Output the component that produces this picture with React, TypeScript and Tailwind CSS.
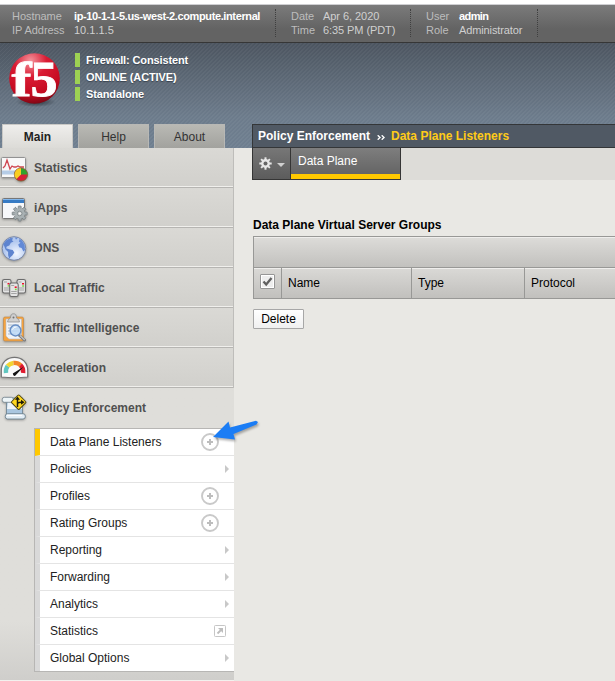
import type { ReactNode } from "react";

function Logo() {
  return (
    <svg width="54" height="56" viewBox="0 0 54 56" className="block overflow-visible">
      <defs>
        <radialGradient id="ball" cx="0.42" cy="0.15" r="0.9">
          <stop offset="0" stopColor="#f4949c" />
          <stop offset="0.35" stopColor="#da1c34" />
          <stop offset="0.75" stopColor="#c40a20" />
          <stop offset="1" stopColor="#6d0712" />
        </radialGradient>
        <radialGradient id="shade">
          <stop offset="0" stopColor="#1f252c" stopOpacity="0.8" />
          <stop offset="1" stopColor="#1f252c" stopOpacity="0" />
        </radialGradient>
      </defs>
      <ellipse cx="28" cy="49" rx="20" ry="5" fill="url(#shade)" />
      <circle cx="26.5" cy="25.5" r="25.3" fill="url(#ball)" />
      <g fill="#fff" stroke="#fff" strokeWidth="0.8" fontWeight="bold">
        <text x="3.5" y="42.5" fontSize="48" fontFamily="Liberation Serif, serif" textLength="20" lengthAdjust="spacingAndGlyphs">f</text>
        <text x="22.5" y="42.5" fontSize="50" fontFamily="Liberation Serif, serif" textLength="27" lengthAdjust="spacingAndGlyphs">5</text>
      </g>
    </svg>
  );
}

function StatisticsIcon() {
  return (
    <>
      <rect x="1.5" y="4.5" width="24" height="20" rx="1" fill="#f8f8f8" stroke="#929292" />
      <path d="M2 18.5h23M2 20.5h13" stroke="#b5cce6" strokeWidth="2" />
      <path d="M3 15l2-2 2-6 3 9 2-3 2 1 2 0 2-1 2 1h4" fill="none" stroke="#cf4651" strokeWidth="1.3" />
      <circle cx="21" cy="21.5" r="6.6" fill="#d91e38" stroke="#74652c" strokeWidth="0.8" />
      <path d="M21 21.5V15.2A6.3 6.3 0 0 0 16.5 26z" fill="#f8ce22" />
      <path d="M21 21.5V15.2A6.3 6.3 0 0 1 27.3 21.5z" fill="#30a42c" />
    </>
  );
}

const gearTeeth = [0, 45, 90, 135];

function AppsIcon() {
  return (
    <>
      <rect x="2.5" y="5.5" width="22" height="20" rx="1" fill="#f7f8fa" stroke="#777" />
      <path d="M3 8h21" stroke="#377bc4" strokeWidth="4" />
      <path d="M3 6.5h21" stroke="#82b7ec" />
      <g fill="#a2aaad" stroke="#727b7e" strokeWidth="0.7">
        {gearTeeth.map((a) => (
          <rect key={a} x="18.2" y="13" width="3" height="15" rx="0.6" transform={`rotate(${a} 19.7 20.5)`} />
        ))}
      </g>
      <circle cx="19.7" cy="20.5" r="5.2" fill="#a9b1b3" />
      <circle cx="19.7" cy="20.5" r="2.3" fill="#d6d9d9" stroke="#7b8487" strokeWidth="0.8" />
      <circle cx="19.7" cy="20.5" r="0.8" fill="#fff" />
    </>
  );
}

function GlobeIcon() {
  return (
    <>
      <defs>
        <radialGradient id="sea" cx="0.6" cy="0.7">
          <stop offset="0" stopColor="#f3f7ff" />
          <stop offset="1" stopColor="#b3c9f0" />
        </radialGradient>
      </defs>
      <circle cx="14" cy="15.5" r="11.8" fill="url(#sea)" stroke="#7786a7" />
      <path d="M3.2 11.5L6 7.5l4.5-2.6 2.5.3-1 2 1.5 1.2-2.7 1.4-1.5 2.8-2.6.8-.6 1.8 3 1 3.6.8 1.6 2.6-2 3-2 1.6-1 1.7-1.2-3.6 0-3.2-2.6-2.6-1.2-3.2z" fill="#5e84cf" />
      <path d="M19.5 6l2.5 1.4 2.6 4.6.4 5-1.6 1.5-1.8-3.6-2.4-.6-1-2.8 2.3-1.8-1.6-1zM15 4.4l2.6.6-1.6 1.8z" fill="#6289d6" />
    </>
  );
}

function Server({ x, y }: { x: number; y: number }) {
  return (
    <g transform={`translate(${x} ${y})`}>
      <rect x="0" y="0" width="8.5" height="13.5" rx="1.8" fill="#e4e4e4" stroke="#6c6c6c" strokeWidth="1.1" />
      <path d="M1.5 2.5h3M1.5 8.5h5.5M1.5 10.5h5.5" stroke="#a4a4a4" />
      <path d="M5 4.2h2" stroke="#ec1226" strokeWidth="1.6" />
      <path d="M5.2 6.4h1.8" stroke="#74dd3e" strokeWidth="1.5" />
    </g>
  );
}

function TrafficIcon() {
  return (
    <>
      <Server x={2.5} y={6.5} />
      <Server x={17} y={6.5} />
      <Server x={9.7} y={10} />
    </>
  );
}

function ClipboardIcon() {
  return (
    <>
      <rect x="3.5" y="4" width="20" height="24" rx="1.5" fill="#f7a440" stroke="#bc8747" strokeWidth="0.6" />
      <path d="M6 6h15.5v20H9l-3-3z" fill="#f1f3f7" stroke="#b9b9b9" strokeWidth="0.6" />
      <path d="M8 12h11M8 15h11M8 18h11M8 21h8" stroke="#a6b8cb" />
      <path d="M7.5 9q0-3 3-4 0-4.2 3-4.2t3 4.2q3 1 3 4z" fill="#d0d0d0" stroke="#888" strokeWidth="0.7" />
      <circle cx="13.5" cy="4.4" r="1" fill="#717171" />
      <path d="M19.5 22.5l5 4.5" stroke="#7c7c7c" strokeWidth="3" strokeLinecap="round" />
      <path d="M20 22.5l4.7 4.5" stroke="#c0c0c0" strokeWidth="1.3" />
      <circle cx="15.5" cy="17.5" r="5.4" fill="#bed9f6" fillOpacity="0.85" stroke="#698fc5" strokeWidth="1.5" />
      <path d="M12.5 16.5q1-3 4-2.5" stroke="#fff" fill="none" />
    </>
  );
}

function GaugeIcon() {
  return (
    <>
      <path d="M1.3 24V17.5C1.3 9.5 7 4.3 14.5 4.3S27.7 9.5 27.7 17.5V24q-13 1.5-26.4 0z" fill="#fafafa" stroke="#747474" strokeWidth="1.2" />
      <g fill="none" strokeWidth="4.4">
        <path d="M6 20Q5.5 16 7.6 13" stroke="#61c7c0" />
        <path d="M7.6 13Q10 10.4 13.5 10" stroke="#f1d431" />
        <path d="M13.5 10Q18 9.5 20.5 12.2" stroke="#f48727" />
        <path d="M20.5 12.2Q23.5 15 23.2 20" stroke="#df1a2e" />
      </g>
      <path d="M12.8 20.5l10.8-6.7-8.4 9q-2 .8-2.4-2.3z" fill="#141414" />
    </>
  );
}

function PolicyIcon() {
  return (
    <>
      <path d="M4.5 5h18v18q-7 3-16 0V10z" fill="#a9c6df" stroke="#6c808e" strokeWidth="0.8" />
      <path d="M8 8h14v8H7z" fill="#edf4fa" />
      <rect x="2.3" y="4.3" width="11" height="5" rx="2" fill="#edf5f8" stroke="#71828b" strokeWidth="0.8" />
      <rect x="5.3" y="20.7" width="20" height="5.3" rx="2.3" fill="#e2edf5" stroke="#637887" strokeWidth="0.8" />
      <path d="M7 22.4h15" stroke="#fff" />
      <rect x="-5.4" y="-5.4" width="10.8" height="10.8" rx="1" transform="translate(18.7 9.2) rotate(45)" fill="#ffd71d" stroke="#4c4210" strokeWidth="1" />
      <path d="M17.5 14V6M17.5 11q0-1.8 4-1.8" fill="none" stroke="#1d1a09" strokeWidth="1.5" />
      <path d="M15 6.8l2.5-3.4L20 6.8zM21 6.7l3.6 2.5L21 11.7z" fill="#1d1a09" />
    </>
  );
}

function ModuleIcon({ children }: { children: ReactNode }) {
  return (
    <svg width="30" height="30" viewBox="0 0 30 30" className="block shrink-0 drop-shadow-[0_1px_1px_rgba(0,0,0,0.3)]">
      {children}
    </svg>
  );
}

const modules = [
  { label: "Statistics", icon: <StatisticsIcon /> },
  { label: "iApps", icon: <AppsIcon /> },
  { label: "DNS", icon: <GlobeIcon /> },
  { label: "Local Traffic", icon: <TrafficIcon /> },
  { label: "Traffic Intelligence", icon: <ClipboardIcon /> },
  { label: "Acceleration", icon: <GaugeIcon /> },
];

type Mark = "plus" | "arrow" | "link";
const submenu: { label: string; mark: Mark; active?: boolean }[] = [
  { label: "Data Plane Listeners", mark: "plus", active: true },
  { label: "Policies", mark: "arrow" },
  { label: "Profiles", mark: "plus" },
  { label: "Rating Groups", mark: "plus" },
  { label: "Reporting", mark: "arrow" },
  { label: "Forwarding", mark: "arrow" },
  { label: "Analytics", mark: "arrow" },
  { label: "Statistics", mark: "link" },
  { label: "Global Options", mark: "arrow" },
];

function MarkIcon({ mark }: { mark: Mark }) {
  if (mark === "plus")
    return (
      <svg width="18" height="18" className="mr-[15px]">
        <circle cx="9" cy="9" r="8" fill="#fff" stroke="#c9c9c9" strokeWidth="1.9" />
        <path d="M6 9h6M9 6v6" stroke="#bdbdbd" strokeWidth="2" />
      </svg>
    );
  if (mark === "link")
    return (
      <svg width="12" height="12" className="mr-2">
        <rect x="0.5" y="0.5" width="11" height="11" rx="0.8" fill="#fff" stroke="#c6c6c6" />
        <path d="M3.5 8.5L7 5" stroke="#bdbdbd" strokeWidth="1.8" />
        <path d="M4 3h5v5z" fill="#bdbdbd" />
      </svg>
    );
  return (
    <svg width="4" height="8" className="mr-[5px]">
      <path d="M0 0l4 4-4 4z" fill="#c8c8c8" />
    </svg>
  );
}

type InfoRow = { name: string; value: string; style: string };

function InfoGroup({ rows, className, label }: { rows: InfoRow[]; className: string; label: string }) {
  return (
    <div className={`flex h-7 shrink-0 flex-col border-r border-dotted border-[#3f3f3f] ${className}`}>
      {rows.map((r) => (
        <div key={r.name} className="flex h-[14px] whitespace-nowrap leading-[14px]">
          <span className={`shrink-0 text-[#bdbdbd] ${label}`}>{r.name}</span>
          <span className={r.style}>{r.value}</span>
        </div>
      ))}
    </div>
  );
}

function Sidebar() {
  return (
    <nav className="relative h-[533px] w-[234px] shrink-0 border-r border-[#bebdba] bg-[#d9d8d4]">
      {modules.map((m) => (
        <div key={m.label} className="flex h-10 items-center border-b border-[#b6b5b2] bg-linear-to-b from-[#dad9d5] to-[#d1d0cc] shadow-[inset_0_-1px_0_#f0efec]">
          <ModuleIcon>{m.icon}</ModuleIcon>
          <span className="ml-1 font-bold text-[#505050]">{m.label}</span>
        </div>
      ))}
      <div className="mr-[-1px] h-[293px] border-b border-[#f2f1ee] bg-linear-to-b from-[#dfdeda] from-80% to-[#cfcecb]">
        <div className="flex h-10 items-center">
          <ModuleIcon><PolicyIcon /></ModuleIcon>
          <span className="ml-1 font-bold text-[#505050]">Policy Enforcement</span>
        </div>
        <ul className="ml-[34px] border-y border-l border-[#b7b6b4] bg-white">
          {submenu.map((s) => (
            <li
              key={s.label}
              className={`flex h-[27px] items-center justify-between border-b border-l-[5px] border-b-[#e4e4e4] pl-[10px] text-[#222] last:h-[26px] last:border-b-0 ${s.active ? "border-l-[#ffc800]" : "border-l-[#d9d9d9]"}`}
            >
              <span>{s.label}</span>
              <MarkIcon mark={s.mark} />
            </li>
          ))}
        </ul>
      </div>
      <svg width="52" height="26" className="absolute left-[210px] top-[272px] drop-shadow-[1px_2px_1px_rgba(0,0,0,0.3)]">
        <path d="M3 17L18.5 1.5 20 7.5 46 0.8 48 2 46.5 4.5 23.5 14 25 19.5z" fill="#1b7df5" />
      </svg>
    </nav>
  );
}

function TableHead() {
  return (
    <div className="mt-1 border-y border-l border-[#989896]">
      <div className="h-[31px] border-b border-[#989896] bg-linear-to-b from-[#dddcd9] to-[#c2c1be] shadow-[inset_0_1px_0_#efeeec]" />
      <div className="flex h-[30px] items-center bg-linear-to-b from-[#dad9d6] to-[#c1c0bd] shadow-[inset_0_1px_0_#efeeec]">
        <div className="flex h-full w-7 items-start justify-center border-r border-[#989896] pt-[6px]">
          <div className="flex size-[15px] items-center justify-center rounded-[1px] border border-[#969696] bg-[#eee] shadow-[inset_0_0_0_1px_#fff]">
            <svg width="11" height="11"><path d="M1.5 5.5l2.7 3L9.5 2" fill="none" stroke="#606060" strokeWidth="2.3" /></svg>
          </div>
        </div>
        <div className="flex h-full w-[130px] items-center border-r border-[#989896] pl-[6px]">Name</div>
        <div className="flex h-full w-[113px] items-center border-r border-[#989896] pl-[6px]">Type</div>
        <div className="pl-[6px]">Protocol</div>
      </div>
    </div>
  );
}

const tabs = [
  { label: "Main", active: true },
  { label: "Help", active: false },
  { label: "About", active: false },
];

export default function App() {
  return (
    <div className="h-[681px] w-[615px] overflow-hidden bg-[#e9e8e4] font-['Liberation_Sans',Arial,sans-serif] text-[12px] leading-[14px] text-black">
      <div className="h-1 bg-white" />
      <div className="flex h-[39px] border-b border-t border-b-[#363636] border-t-[#cfcfd2] bg-linear-to-b from-[#7b7b7b] to-[#636363] to-65% pl-3 pt-1 text-[11px]">
        <InfoGroup
          className="w-[264px]"
          label="w-[62px] tracking-[-0.05px]"
          rows={[
            { name: "Hostname", value: "ip-10-1-1-5.us-west-2.compute.internal", style: "font-bold text-white tracking-[-0.38px]" },
            { name: "IP Address", value: "10.1.1.5", style: "text-[#d0d0d0]" },
          ]}
        />
        <InfoGroup
          className="w-[135px] pl-[15px]"
          label="w-8"
          rows={[
            { name: "Date", value: "Apr 6, 2020", style: "text-[#d0d0d0] tracking-[-0.05px]" },
            { name: "Time", value: "6:35 PM (PDT)", style: "text-[#d0d0d0] tracking-[-0.08px]" },
          ]}
        />
        <InfoGroup
          className="w-[127px] pl-[15px]"
          label="w-[33px]"
          rows={[
            { name: "User", value: "admin", style: "font-bold text-white tracking-[-0.6px]" },
            { name: "Role", value: "Administrator", style: "text-[#d0d0d0] tracking-[-0.12px]" },
          ]}
        />
      </div>
      <header className="flex h-[105px] flex-col justify-between bg-[repeating-linear-gradient(135deg,rgba(255,255,255,0.045)_0px_1.4px,transparent_1.4px_2.83px),linear-gradient(to_bottom,#4c5560,#6c7b8b_70%,#6f7f90)]">
        <div className="flex pl-2 pt-[10px]">
          <Logo />
          <ul className="ml-[13px] font-bold leading-[14px] text-white">
            {["Firewall: Consistent", "ONLINE (ACTIVE)", "Standalone"].map((t) => (
              <li key={t} className="mb-[3px] flex h-[14px] items-center border-l-[5px] border-[#9dd153] pl-[6px] text-[11px] tracking-[-0.12px] [text-shadow:0_1px_1px_#39434f]">{t}</li>
            ))}
          </ul>
        </div>
        <div className="flex h-6">
          <div className="flex w-[252px] shrink-0 gap-[5px] pl-[2px]">
            {tabs.map((t) => (
              <div key={t.label} className={`flex h-6 w-[71px] items-center justify-center border-l border-r border-t ${t.active ? "border-[#c9c8c5] bg-linear-to-b from-[#efeeec] to-[#dcdbd7] font-bold text-[#222]" : "border-[#b8b8b5] bg-linear-to-b from-[#b9b9b4] to-[#a2a29e] text-[#333]"}`}>
                {t.label}
              </div>
            ))}
          </div>
          <div className="flex grow items-center border-y border-l border-[#343638] bg-[#505964] pl-[5px] font-bold text-white">
            Policy Enforcement
            <svg width="8" height="5" className="ml-[7px] mr-[6px] mt-[2px]">
              <path d="M0.7 0.3L3 2.5 0.7 4.7M4.7 0.3L7 2.5 4.7 4.7" fill="none" stroke="#fff" strokeWidth="1.4" />
            </svg>
            <span className="text-[#ffcb18]">Data Plane Listeners</span>
          </div>
        </div>
      </header>
      <div className="flex">
        <Sidebar />
        <main className="min-w-0 grow pl-[18px]">
          <div className="flex h-8 bg-[#dddcd8]">
            <div className="flex w-[39px] items-center justify-center gap-[5px] border-b border-l border-r border-[#353535] bg-linear-to-b from-[#777] to-[#5c5c5c]">
              <svg width="13" height="13" viewBox="0 0 13 13">
                <g fill="#e7e7e7">
                  {gearTeeth.map((a) => <rect key={a} x="5.5" y="0.3" width="2" height="12.4" transform={`rotate(${a} 6.5 6.5)`} />)}
                  <circle cx="6.5" cy="6.5" r="4.4" />
                </g>
                <circle cx="6.5" cy="6.5" r="2" fill="#666" />
              </svg>
              <svg width="8" height="4" className="mt-[3px]"><path d="M0 0h8L4 4z" fill="#d0d0d0" /></svg>
            </div>
            <div className="w-[110px] border-b border-r border-[#353535] bg-linear-to-b from-[#7e7e7e] to-[#606060]">
              <div className="h-[26px] pl-[7px] pt-[6px] text-white">Data Plane</div>
              <div className="h-[5px] bg-[#ffc900]" />
            </div>
          </div>
          <section className="pl-px pt-[38px]">
            <h1 className="font-bold">Data Plane Virtual Server Groups</h1>
            <TableHead />
            <button className="mt-[10px] flex h-5 w-[51px] items-center justify-center rounded-[1px] border border-[#a7a7a7] bg-linear-to-b from-white to-[#f0f0f0]">Delete</button>
          </section>
        </main>
      </div>
    </div>
  );
}
